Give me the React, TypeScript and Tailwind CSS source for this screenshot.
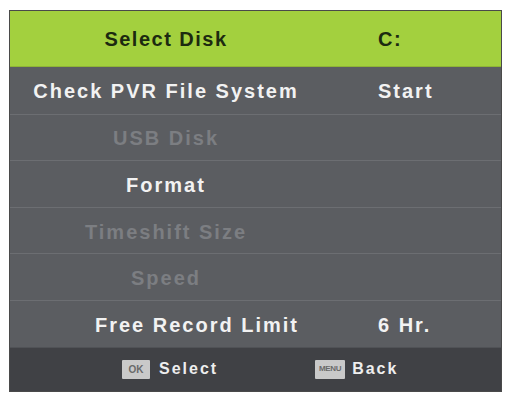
import React from 'react'

type Row = {
  label: string
  value?: string
  dim?: boolean
  shift?: boolean
}

const ROWS: Row[] = [
  { label: 'Check PVR File System', value: 'Start' },
  { label: 'USB Disk', dim: true },
  { label: 'Format' },
  { label: 'Timeshift Size', dim: true },
  { label: 'Speed', dim: true },
  { label: 'Free Record Limit', value: '6 Hr.', shift: true },
]

const font = { fontFamily: '"Liberation Sans", Arial, sans-serif' }

export default function App(): React.ReactElement {
  return (
    <div className="w-[507px] h-[395px] bg-white pt-[10px] pl-[9px]" style={font}>
      <div className="w-[493px] h-[382px] flex flex-col border border-[#4a4a4a] bg-[#5b5d61]">
        {/* header */}
        <div className="h-[56px] flex items-center bg-[#a3d03e] border-b border-[#8fb535]">
          <div className="w-[312px] text-center text-[20px] font-bold tracking-[1.5px] text-[#1c2a10]">Select Disk</div>
          <div className="pl-[56px] text-[20px] font-bold tracking-[1.5px] text-[#1c2a10]">C:</div>
        </div>

        {/* rows */}
        {ROWS.map((r, i) => (
          <div
            key={r.label}
            className={`h-[46.6px] flex items-center pt-[2px] bg-[#5b5d61] ${i > 0 ? 'border-t border-[#6c6e72]' : ''}`}
          >
            <div
              className={`w-[312px] text-center text-[20px] font-bold tracking-[2px] ${r.dim ? 'text-[#7c7e82]' : 'text-[#f2f2f2]'} ${r.shift ? 'pl-[62px]' : ''}`}
            >
              {r.label}
            </div>
            {r.value && (
              <div className="pl-[56px] text-[20px] font-bold tracking-[2px] text-[#f2f2f2]">{r.value}</div>
            )}
          </div>
        ))}

        {/* footer */}
        <div className="flex-1 flex items-center bg-[#404145] border-t border-[#505256]">
          <div className="flex items-center gap-[9px] pl-[112px]">
            <span className="inline-flex items-center justify-center h-[19px] w-[28px] bg-[#c9c9c9] text-[#6a6a6a] text-[10px] font-bold rounded-[1px]">OK</span>
            <span className="text-[16px] font-bold tracking-[2px] text-[#eeeeee]">Select</span>
          </div>
          <div className="flex items-center gap-[7px] pl-[97px]">
            <span className="inline-flex items-center justify-center h-[19px] w-[30px] bg-[#c9c9c9] text-[#6a6a6a] text-[8px] font-bold tracking-[-0.3px] rounded-[1px]">MENU</span>
            <span className="text-[16px] font-bold tracking-[2px] text-[#eeeeee]">Back</span>
          </div>
        </div>
      </div>
    </div>
  )
}
